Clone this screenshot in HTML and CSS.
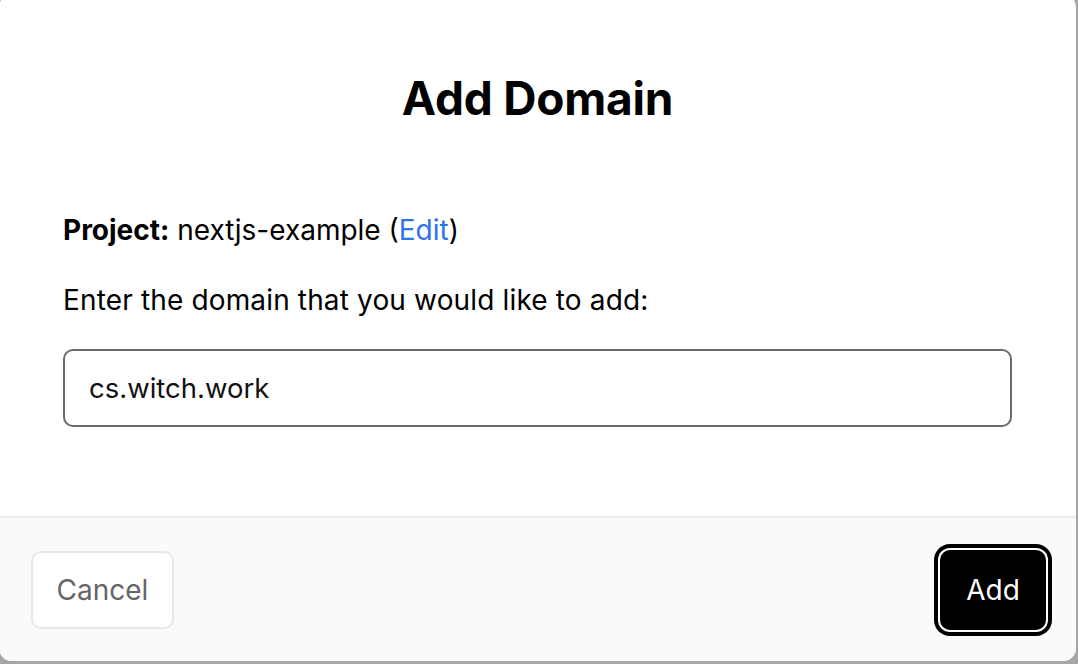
FILE: index.html
```html
<!DOCTYPE html>
<html lang="en">
<head>
<meta charset="utf-8">
<title>Add Domain</title>
<link rel="stylesheet" href="styles.css">
</head>
<body>
<div class="modal">
  <div class="content">
    <h1 class="title">Add Domain</h1>
    <p class="project"><strong>Project:</strong> nextjs-example (<a class="edit" href="#">Edit</a>)</p>
    <p class="prompt">Enter the domain that you would like to add:</p>
    <div class="field">cs.witch.work</div>
  </div>
  <div class="footer">
    <button class="btn btn-cancel">Cancel</button>
    <button class="btn btn-add">Add</button>
  </div>
</div>
</body>
</html>
```
FILE: styles.css
```css
html, body {
  margin: 0;
  padding: 0;
  height: 100%;
  overflow: hidden;
}
body {
  background: #a6a6a6;
  font-family: Inter, "Noto Sans", "Liberation Sans", sans-serif;
  color: #000;
}
.modal {
  margin: -6px 0 0 -1px;
  width: 1077px;
  height: 667px;
  background: #fff;
  border-radius: 13px;
  display: flex;
  flex-direction: column;
  overflow: hidden;
}
.content {
  flex: 1;
  padding: 80px 64px 0 64px;
}
.title {
  margin: 0;
  text-align: center;
  font-size: 46px;
  line-height: 48px;
  font-weight: 650;
  letter-spacing: -0.2px;
}
.project {
  margin: 92px 0 0 0;
  font-size: 28px;
  line-height: 32px;
}
.project strong {
  font-weight: 700;
}
.edit {
  color: #2f74e6;
  text-decoration: none;
}
.prompt {
  margin: 38px 0 0 0;
  font-size: 28px;
  line-height: 32px;
  letter-spacing: 0.15px;
}
.field {
  margin-top: 33px;
  height: 78px;
  box-sizing: border-box;
  border: 2px solid #6b6b6b;
  border-radius: 10px;
  padding: 0 24px;
  display: flex;
  align-items: center;
  font-size: 27.5px;
  color: #111;
}
.footer {
  height: 145px;
  box-sizing: border-box;
  border-top: 2px solid #ececec;
  background: #fafafa;
  display: flex;
  align-items: center;
  justify-content: space-between;
  padding: 0 30px 0 32px;
}
.btn {
  font-family: inherit;
  font-size: 28px;
  border-radius: 10px;
  cursor: pointer;
  box-sizing: border-box;
  padding: 0;
}
.btn-cancel {
  width: 143px;
  height: 78px;
  background: #fff;
  color: #666;
  border: 2px solid #e8e8e8;
}
.btn-add {
  width: 106px;
  height: 80px;
  background: #000;
  color: #fff;
  border: none;
  box-shadow: 0 0 0 2px #fff, 0 0 0 6px #000;
}
```
